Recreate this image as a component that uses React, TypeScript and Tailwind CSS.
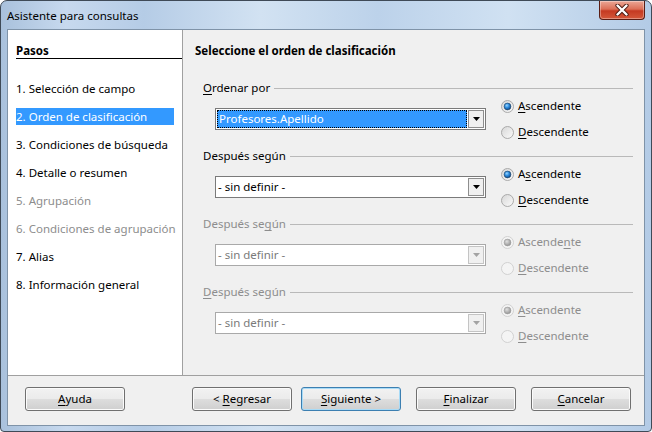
import type { ReactNode } from "react";

const font = "font-['Noto_Sans',sans-serif]";

function U({ children }: { children: ReactNode }) {
  return <span className="underline underline-offset-[2px]">{children}</span>;
}

function Radio({ checked, disabled }: { checked: boolean; disabled: boolean }) {
  const ring = disabled ? "#cdcdcd" : "#a3a3a3";
  return (
    <svg width="13" height="13" viewBox="0 0 13 13" className="shrink-0">
      <defs>
        <linearGradient id="rfill" x1="0" y1="0" x2="1" y2="1">
          <stop offset="0%" stopColor="#d6d6d6" />
          <stop offset="100%" stopColor="#fbfbfb" />
        </linearGradient>
        <radialGradient id="rdot" cx="40%" cy="35%" r="70%">
          <stop offset="0%" stopColor="#9ad7ff" />
          <stop offset="45%" stopColor="#2f8de0" />
          <stop offset="100%" stopColor="#0a3f7a" />
        </radialGradient>
        <radialGradient id="rdotd" cx="40%" cy="35%" r="70%">
          <stop offset="0%" stopColor="#e0e0e0" />
          <stop offset="100%" stopColor="#8e8e8e" />
        </radialGradient>
      </defs>
      <circle
        cx="6.5"
        cy="6.5"
        r="6"
        fill={disabled ? "#f4f4f4" : "url(#rfill)"}
        stroke={ring}
        strokeWidth="0.9"
      />
      {checked && (
        <circle
          cx="6.5"
          cy="6.5"
          r="3.4"
          fill={disabled ? "url(#rdotd)" : "url(#rdot)"}
          stroke={disabled ? "#9b9b9b" : "#1d3f63"}
          strokeWidth="0.6"
        />
      )}
    </svg>
  );
}

function Dropdown({
  value,
  enabled,
  focused,
}: {
  value: string;
  enabled: boolean;
  focused?: boolean;
}) {
  return (
    <div
      className={`flex h-[22px] w-[271px] border bg-white p-px ${
        enabled ? "border-[#7a7a7a]" : "border-[#a9a9a9]"
      }`}
    >
      <div
        className={`flex flex-1 items-center px-[1px] leading-none ${
          focused
            ? "border border-dotted border-black bg-[#3399ff] text-white"
            : enabled
              ? "text-black"
              : "text-[#7a7a7a]"
        }`}
      >
        {value}
      </div>
      <div
        className={`ml-px flex w-[16px] items-center justify-center border bg-[#f0f0f0] ${
          enabled ? "border-[#8e8e8e]" : "border-[#c4c4c4]"
        }`}
      >
        <svg width="7" height="4" viewBox="0 0 7 4">
          <polygon points="0,0 7,0 3.5,4" fill={enabled ? "#000" : "#a3a3a3"} />
        </svg>
      </div>
    </div>
  );
}

type Group = {
  label: ReactNode;
  value: string;
  enabled: boolean;
  focused?: boolean;
  asc: ReactNode;
  desc: ReactNode;
};

const groups: Group[] = [
  {
    label: (
      <>
        <U>O</U>rdenar por
      </>
    ),
    value: "Profesores.Apellido",
    enabled: true,
    focused: true,
    asc: (
      <>
        <U>A</U>scendente
      </>
    ),
    desc: (
      <>
        <U>D</U>escendente
      </>
    ),
  },
  {
    label: <>Después según</>,
    value: "- sin definir -",
    enabled: true,
    asc: (
      <>
        A<U>s</U>cendente
      </>
    ),
    desc: (
      <>
        <U>D</U>escendente
      </>
    ),
  },
  {
    label: (
      <>
        Después se<U>g</U>ún
      </>
    ),
    value: "- sin definir -",
    enabled: false,
    asc: (
      <>
        Ascende<U>n</U>te
      </>
    ),
    desc: (
      <>
        <U>D</U>escendente
      </>
    ),
  },
  {
    label: (
      <>
        <U>D</U>espués según
      </>
    ),
    value: "- sin definir -",
    enabled: false,
    asc: (
      <>
        <U>A</U>scendente
      </>
    ),
    desc: (
      <>
        <U>D</U>escendente
      </>
    ),
  },
];

const steps = [
  { n: 1, text: "Selección de campo", enabled: true },
  { n: 2, text: "Orden de clasificación", enabled: true, active: true },
  { n: 3, text: "Condiciones de búsqueda", enabled: true },
  { n: 4, text: "Detalle o resumen", enabled: true },
  { n: 5, text: "Agrupación", enabled: false },
  { n: 6, text: "Condiciones de agrupación", enabled: false },
  { n: 7, text: "Alias", enabled: true },
  { n: 8, text: "Información general", enabled: true },
];

function WinButton({ children, isDefault }: { children: ReactNode; isDefault?: boolean }) {
  return (
    <button
      type="button"
      className={`h-[24px] w-[100px] rounded-[3px] border bg-[linear-gradient(to_bottom,#f2f2f2_0%,#ebebeb_48%,#dddddd_52%,#cfcfcf_100%)] leading-none text-black ${
        isDefault
          ? "border-[#3c7fb1] shadow-[inset_0_0_0_1px_#a8dbf7]"
          : "border-[#707070] shadow-[inset_0_0_0_1px_#fbfbfb]"
      }`}
    >
      {children}
    </button>
  );
}

export default function App() {
  return (
    <div
      className={`${font} flex h-[432px] w-[652px] flex-col rounded-t-[7px] rounded-b-[4px] border border-[#3f4a57] bg-[linear-gradient(90deg,#a9c1dc_0%,#c7d9ee_10%,#b5cce6_22%,#d2e2f2_40%,#bcd2ea_58%,#d0e1f2_78%,#b3cbe6_100%)] text-[11.5px] text-black`}
    >
      {/* title bar */}
      <div className="flex h-[28px] shrink-0 items-start justify-between">
        <div className="pl-[6px] pt-[7px] text-[11.5px] leading-[16px] text-black">
          Asistente para consultas
        </div>
        <div className="mr-[6px] flex h-[19px] w-[46px] items-center justify-center rounded-b-[4px] border border-t-0 border-[#5a1d14] bg-[linear-gradient(to_bottom,#eba796_0%,#dc6f57_45%,#c53a22_55%,#d4583a_100%)] shadow-[inset_0_0_0_1px_rgba(255,255,255,0.35)]">
          <svg width="14" height="12" viewBox="0 0 14 12">
            <path
              d="M2.5 1.5 L11.5 10.5 M11.5 1.5 L2.5 10.5"
              stroke="#4a1a12"
              strokeWidth="4.2"
              strokeLinecap="round"
            />
            <path
              d="M2.5 1.5 L11.5 10.5 M11.5 1.5 L2.5 10.5"
              stroke="#fff"
              strokeWidth="2.4"
              strokeLinecap="round"
            />
          </svg>
        </div>
      </div>

      {/* client area */}
      <div className="mx-[6px] flex h-[397px] shrink-0 flex-col border border-[#7f93a8] bg-[#f0f0f0]">
        <div className="flex h-[345px]">
          {/* steps */}
          <div className="w-[175px] shrink-0 border-r border-[#a0a0a0] bg-white pl-[8px] pt-[14px]">
            <div className="border-b border-black font-bold leading-[14px]">Pasos</div>
            <div className="mt-[21px] flex flex-col gap-[11px]">
              {steps.map((s) => (
                <div
                  key={s.n}
                  className={`h-[17px] w-[158px] whitespace-nowrap leading-[17px] ${
                    s.active ? "bg-[#3399ff] text-white" : s.enabled ? "text-black" : "text-[#8d8d8d]"
                  }`}
                >
                  {s.n}. {s.text}
                </div>
              ))}
            </div>
          </div>

          {/* sort order */}
          <div className="flex-1 pt-[14px]">
            <div className="pl-[12px] font-bold leading-[14px]">Seleccione el orden de clasificación</div>
            <div className="mt-[22px] flex flex-col gap-[8px] pl-[20px] pr-[11px]">
              {groups.map((g, i) => (
                <div key={i} className="h-[60px]">
                  <div className="flex h-[16px] items-center">
                    <span className={`whitespace-nowrap ${g.enabled ? "text-black" : "text-[#8d8d8d]"}`}>
                      {g.label}
                    </span>
                    <div className="ml-[4px] h-px flex-1 bg-[#b9b9b9]" />
                  </div>
                  <div className="mt-[2px] flex pl-[12px]">
                    <div className="mt-[10px]">
                      <Dropdown value={g.value} enabled={g.enabled} focused={g.focused} />
                    </div>
                    <div className="ml-[15px] flex flex-col gap-[10px]">
                      <div className="flex h-[16px] items-center gap-[4px]">
                        <Radio checked disabled={!g.enabled} />
                        <span className={g.enabled ? "text-black" : "text-[#8d8d8d]"}>{g.asc}</span>
                      </div>
                      <div className="flex h-[16px] items-center gap-[4px]">
                        <Radio checked={false} disabled={!g.enabled} />
                        <span className={g.enabled ? "text-black" : "text-[#8d8d8d]"}>{g.desc}</span>
                      </div>
                    </div>
                  </div>
                </div>
              ))}
            </div>
          </div>
        </div>

        {/* buttons */}
        <div className="flex flex-1 items-start border-t border-[#a0a0a0] pl-[17px] pt-[11px]">
          <WinButton>
            <U>A</U>yuda
          </WinButton>
          <div className="ml-[67px]">
            <WinButton>
              &lt; <U>R</U>egresar
            </WinButton>
          </div>
          <div className="ml-[9px]">
            <WinButton isDefault>
              <U>S</U>iguiente &gt;
            </WinButton>
          </div>
          <div className="ml-[15px]">
            <WinButton>
              <U>F</U>inalizar
            </WinButton>
          </div>
          <div className="ml-[15px]">
            <WinButton>
              <U>C</U>ancelar
            </WinButton>
          </div>
        </div>
      </div>
    </div>
  );
}
